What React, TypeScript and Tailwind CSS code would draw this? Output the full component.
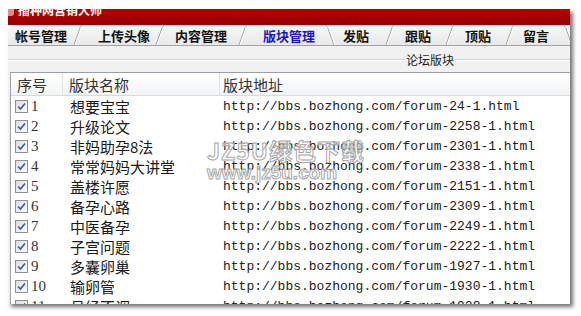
import React from "react";

const rows: [string, string, string][] = [
  ["1", "想要宝宝", "24"],
  ["2", "升级论文", "2258"],
  ["3", "非妈助孕8法", "2301"],
  ["4", "常常妈妈大讲堂", "2338"],
  ["5", "盖楼许愿", "2151"],
  ["6", "备孕心路", "2309"],
  ["7", "中医备孕", "2249"],
  ["8", "子宫问题", "2222"],
  ["9", "多囊卵巢", "1927"],
  ["10", "输卵管", "1930"],
  ["11", "月经不调", "1928"],
];

const tabs: { label: string; w: number; pl: number; active?: boolean }[] = [
  { label: "帐号管理", w: 63, pl: 7 },
  { label: "上传头像", w: 68, pl: 13 },
  { label: "内容管理", w: 69, pl: 8 },
  { label: "版块管理", w: 73, pl: 13, active: true },
  { label: "发贴", w: 46, pl: 6 },
  { label: "跟贴", w: 46, pl: 8 },
  { label: "顶贴", w: 46, pl: 8 },
  { label: "留言", w: 44, pl: 6 },
];

function Sep({ back }: { back?: boolean }) {
  return (
    <svg width="14" height="20" viewBox="0 0 14 20" className="shrink-0">
      {back ? (
        <>
          <path d="M3 0 Q5 2 6 6 L11 20" fill="none" stroke="#9c9c9c" strokeWidth="1" />
          <path d="M4 0 Q6 2 7 6 L12 20" fill="none" stroke="#ffffff" strokeWidth="1" />
        </>
      ) : (
        <>
          <path d="M3 20 L8 6 Q9 2 11 0" fill="none" stroke="#9c9c9c" strokeWidth="1" />
          <path d="M4 20 L9 6 Q10 2 12 0" fill="none" stroke="#ffffff" strokeWidth="1" />
        </>
      )}
    </svg>
  );
}

function Check() {
  return (
    <span className="w-[13px] h-[13px] border border-[#8f8f8f] bg-gradient-to-br from-[#dcdcdc] to-[#fdfdfd] flex items-center justify-center shrink-0">
      <svg width="9" height="9" viewBox="0 0 9 9">
        <path d="M1 4.5 L3.5 7 L8 1.5" fill="none" stroke="#3a5aa8" strokeWidth="1.6" />
      </svg>
    </span>
  );
}

export default function App() {
  const cjk = { fontFamily: '"Noto Sans CJK SC", "Noto Sans", sans-serif' };
  return (
    <div className="w-[581px] h-[316px] bg-white overflow-hidden relative" style={cjk}>
      <div className="ml-[8px] mt-[9px] w-[562px] h-[295px] overflow-hidden flex flex-col bg-[#f1f1f1] shadow-[3px_3px_4px_rgba(0,0,0,0.55)]">
        {/* title bar */}
        <div className="h-[16px] shrink-0 bg-gradient-to-b from-[#b40000] to-[#980000] overflow-hidden flex items-start">
          <span className="w-[6px] h-[7px] bg-[#e88] rounded-br-[3px]" />
          <span className="text-white text-[12px] font-bold leading-[12px] -mt-[5px] ml-[4px]">
            播种网营销大师
          </span>
        </div>
        {/* tab bar */}
        <div className="h-[21px] shrink-0 flex items-end border-b border-[#a3a3a3] bg-gradient-to-b from-[#f7f7f7] to-[#e9e9e9]">
          {tabs.map((t, i) => (
            <React.Fragment key={t.label}>
              <div
                className={`h-[20px] shrink-0 flex items-center text-[13px] font-bold leading-none ${
                  t.active ? "text-[#1616c8]" : "text-[#111]"
                }`}
                style={{ width: t.w, paddingLeft: t.pl }}
              >
                {t.label}
              </div>
              <Sep back={t.active || i === tabs.length - 1} />
            </React.Fragment>
          ))}
        </div>
        {/* group label */}
        <div className="h-[14px] mt-[7px] shrink-0 flex items-center">
          <div className="w-[397px] h-[2px] border-t border-[#d2d2d2] border-b border-b-white" />
          <span className="px-[1px] text-[12px] leading-none text-[#222]">论坛版块</span>
          <div className="flex-1 h-[2px] border-t border-[#d2d2d2] border-b border-b-white" />
        </div>
        {/* list */}
        <div className="ml-[2px] mt-[5px] flex-1 bg-white border-l border-t border-[#9aa0a8] overflow-hidden">
          <div className="h-[23px] flex items-center border-b border-[#dadada] bg-gradient-to-b from-[#ffffff] to-[#f3f4f5] text-[15px] text-[#333] leading-none">
            <div className="w-[52px] pl-[6px] h-full flex items-center border-r border-[#e2e2e2]">序号</div>
            <div className="w-[157px] pl-[6px] h-full flex items-center border-r border-[#e2e2e2]">版块名称</div>
            <div className="flex-1 pl-[3px] h-full flex items-center">版块地址</div>
          </div>
          {rows.map(([n, name, id]) => (
            <div key={n} className="h-[20px] flex items-center text-[#1a1a1a]">
              <div className="w-[52px] pl-[4px] flex items-center gap-[3px]">
                <Check />
                <span className="text-[15px] leading-none text-[#333]" style={{ fontFamily: '"Liberation Serif", serif' }}>
                  {n}
                </span>
              </div>
              <div className="w-[157px] pl-[7px] text-[15px] leading-none">{name}</div>
              <div
                className="flex-1 pl-[3px] text-[13px] leading-none whitespace-nowrap text-[#222]"
                style={{ fontFamily: '"Liberation Mono", monospace' }}
              >
                {`http://bbs.bozhong.com/forum-${id}-1.html`}
              </div>
            </div>
          ))}
        </div>
      </div>
      {/* watermark */}
      <div className="absolute left-[207px] top-[139px] pointer-events-none flex flex-col items-start leading-none">
        <span className="text-[23px] font-bold text-[rgba(255,255,255,0.6)] [-webkit-text-stroke:1px_#a8a8a8] tracking-[1px]">
          JZ5U绿色下载
        </span>
        <span
          className="text-[19px] font-bold mt-[1px] text-[rgba(255,255,255,0.6)] [-webkit-text-stroke:1px_#a8a8a8]"
          style={{ fontFamily: '"Liberation Sans", sans-serif' }}
        >
          www.jz5u.com
        </span>
      </div>
    </div>
  );
}
